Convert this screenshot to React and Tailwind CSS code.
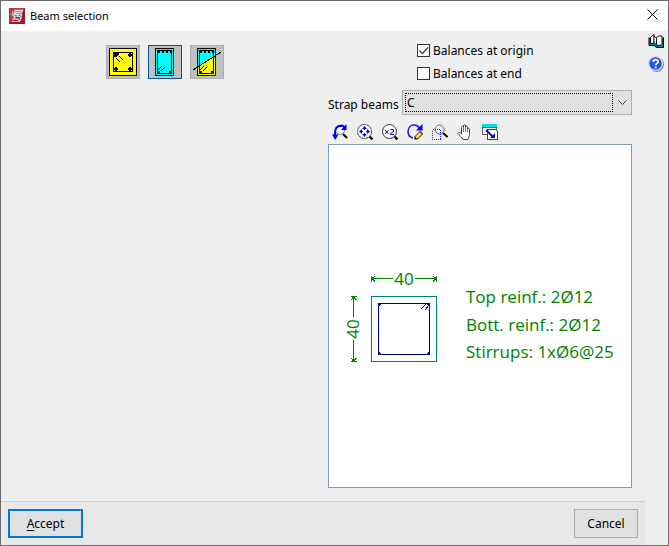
import React from "react";

function UndoZoomIcon() {
  return (
    <svg viewBox="0 0 16 16" className="size-4" fill="none">
      <circle cx="8" cy="6" r="4.5" fill="#fff" stroke="#777" />
      <path d="M11 10l4 4" stroke="#111" strokeWidth="2.2" />
      <path d="M13 4C11 0 3 1 3 9v3" stroke="#0000f0" strokeWidth="2" />
      <path d="M0 10.500h6.500L3.200 16z" fill="#0000f0" />
      <path d="M14.500 0v6H9z" fill="#0000f0" />
    </svg>
  );
}

function ZoomAllIcon() {
  return (
    <svg viewBox="0 0 16 16" className="size-4" fill="none">
      <circle cx="7.5" cy="7.5" r="7" fill="#fff" stroke="#333" strokeDasharray="3 0.5" />
      <path d="M12.500 12.500l3 3" stroke="#111" strokeWidth="2.4" />
      <path d="M7.500 3v3M7.500 9v3M3 7.500h3M9 7.500h3" stroke="#0000f0" />
      <path d="M5 5h5L7.500 2zM5 10h5l-2.500 3zM5 5v5L2 7.500zM10 5v5l3-2.500z" fill="#0000f0" />
      <path d="M6 6h3v3H6z" fill="#fff" />
    </svg>
  );
}

function ZoomDoubleIcon() {
  return (
    <svg viewBox="0 0 16 16" className="size-4" fill="none">
      <circle cx="7.5" cy="7.5" r="7" fill="#fff" stroke="#333" />
      <path d="M12.500 12.500l3 3" stroke="#111" strokeWidth="2.4" />
      <path d="M3 6l3.500 4M6.500 6L3 10M8.500 5.500h3v2l-3 2v1H12" stroke="#0000f0" />
    </svg>
  );
}

function RedrawIcon() {
  return (
    <svg viewBox="0 0 16 16" className="size-4" fill="none">
      <path d="M6 14C-1.500 12 0 1 7 1c3 0 5 2 6 4" stroke="#1414f0" strokeWidth="1.5" />
      <path d="M15.500 0v6.500H9z" fill="#0000f0" />
      <path d="M13 7.500l2.500 2.500-5 5H8v-2.500z" fill="#ffe33a" stroke="#111" />
      <path d="M13 7.500l2.500 2.500" stroke="#b22" strokeWidth="1.5" />
      <path d="M7 15.500l1.500-2.500 1.500 1.500z" fill="#111" />
    </svg>
  );
}

function ZoomWindowIcon() {
  return (
    <svg viewBox="0 0 16 16" className="size-4" fill="none">
      <circle cx="7.5" cy="5.5" r="4.5" fill="#f4f4f4" stroke="#666" />
      <path d="M11 9l4.500 4" stroke="#111" strokeWidth="2.2" />
      <path d="M.5 5.500h8v10h-8z" stroke="#2222ff" strokeDasharray="1 1" shapeRendering="crispEdges" />
    </svg>
  );
}

function PanIcon() {
  return (
    <svg viewBox="0 0 16 16" className="size-4" fill="none">
      <path
        d="M6 15.500c-1-2-3.500-4-5-6 0-1.500 1.500-1.500 3.500.5V3.500c0-1.500 1.800-1.500 2 0V2c0-1.700 2-1.700 2 0v1c.2-1.500 2-1.300 2 .2V5c.3-1.300 2-1 2 .3V10c0 2.500-1 3.500-1.500 5.500z"
        fill="#fff"
        stroke="#444"
      />
      <path d="M6.500 3.500V8M8.500 3v5M10.500 5v3" stroke="#777" />
    </svg>
  );
}

function FullViewIcon() {
  return (
    <svg viewBox="0 0 16 16" className="size-4" fill="none" shapeRendering="crispEdges">
      <path d="M.5.500h14v10H.5z" fill="#fff" stroke="#666" />
      <path d="M0 0h15v3H0z" fill="#00dede" />
      <path d="M0 3.500h15" stroke="#555" />
      <path d="M5.500 5.500h8l2 2v8h-10z" fill="#fff" stroke="#444" />
      <path d="M4 6l7 7" stroke="#0000d0" strokeWidth="1.8" shapeRendering="auto" />
      <path d="M13 9v5H8z" fill="#0000d0" shapeRendering="auto" />
    </svg>
  );
}

function FullSectionIcon() {
  return (
    <svg viewBox="0 0 32 32" className="size-8" fill="none" shapeRendering="crispEdges">
      <path d="M2.500 2.500h27v27h-27z" fill="#ff0" stroke="#000" />
      <path d="M6.500 6.500h19v19h-19z" stroke="#000" />
      <path d="M6 6h6v3h-1v1h-1v1H6zM22 7h2v1h1v2h-1v1h-2v-1h-1V8h1zM8 21h2v1h1v2h-1v1H8v-1H7v-2h1zM22 21h2v1h1v2h-1v1h-2v-1h-1v-2h1z" fill="#000" />
      <path d="M9 12l4 4M12 10l4 4" stroke="#000" />
    </svg>
  );
}

function StrapSectionIcon({ split }) {
  return (
    <svg viewBox="0 0 32 32" className="size-8" fill="none" shapeRendering="crispEdges">
      <path d="M6.500 2.500h18v27h-18z" fill="#0ff" />
      {split && <path d="M6 21L25 9v21H6z" fill="#ff0" />}
      <path d="M6.500 2.500h18v27h-18zM8.500 4.500h14v23h-14z" stroke="#000" />
      <path d="M9 5h2v2H9zM13 5h2v2h-2zM17 5h2v2h-2zM21 5h2v2h-2zM9 25h2v2H9zM20 25h2v2h-2z" fill="#000" />
      <path d="M9 24l4-4M12 25l4-4" stroke="#000" />
      {split && <path d="M2 24L30 6" stroke="#000" />}
    </svg>
  );
}

const tools = [
  ["Previous view", UndoZoomIcon],
  ["Zoom all", ZoomAllIcon],
  ["Zoom x2", ZoomDoubleIcon],
  ["Redraw", RedrawIcon],
  ["Zoom window", ZoomWindowIcon],
  ["Pan", PanIcon],
  ["Full view", FullViewIcon],
];

function TypeButton({ label, selected, children }) {
  return (
    <button
      type="button"
      aria-label={label}
      aria-pressed={!!selected}
      className={`flex size-[34px] items-center justify-center border bg-[#c0c0c0] ${
        selected ? "border-[#00539c]" : "border-[#adadad]"
      }`}
    >
      {children}
    </button>
  );
}

function CheckOption({ label, defaultChecked }) {
  return (
    <label className="flex h-[23px] items-center gap-[3px]">
      <span className="relative flex size-[13px]">
        <input
          type="checkbox"
          defaultChecked={defaultChecked}
          className="peer size-[13px] appearance-none border border-[#333] bg-white"
        />
        <svg
          viewBox="0 0 13 13"
          className="pointer-events-none absolute inset-0 hidden size-[13px] peer-checked:block"
          fill="none"
        >
          <path d="M2.500 6.500l3 3 5.500-6" stroke="#444" strokeWidth="1.3" />
        </svg>
      </span>
      {label}
    </label>
  );
}

function SectionDrawing() {
  return (
    <svg viewBox="0 0 302 342" className="min-h-0 w-full flex-1" fill="none" role="img" aria-label="Beam section">
      <g shapeRendering="crispEdges">
        <path d="M42.500 151.500h65v65h-65z" stroke="#008080" />
        <path d="M49.500 158.500h51v51h-51z" stroke="#000080" />
        <path d="M49 158h4v1h-1v1h-1v1h-1v1h-1zM97 158h4v4h-1v-1h-1v-1h-1v-1h-1zM49 210h4v-1h-1v-1h-1v-1h-1v-1h-1zM101 210h-4v-1h1v-1h1v-1h1v-1h1z" fill="#000080" />
        <path d="M97 159l-5 5M100 160l-4 5" stroke="#000080" />
        <g stroke="#008000">
          <path d="M42.500 131v6M42.500 133.500H64M86 133.500h21.500M107.500 131v6M46 131l-3 2.500 3 3M104 131l3 2.500-3 3" />
          <path d="M22 151.500h6M24.500 151.500V172M24.500 195v21.500M22 216.500h6M22 155l2.500-3 3 3M22 213l2.500 3 3-3" />
        </g>
      </g>
      <g fill="#008000" className="font-['Open_Sans',sans-serif] text-[17px]">
        <text x="75" y="140" textAnchor="middle">40</text>
        <text x="30" y="184" textAnchor="middle" transform="rotate(-90 30 184)">40</text>
        <text x="137" y="158">Top reinf.: 2Ø12</text>
        <text x="137" y="186">Bott. reinf.: 2Ø12</text>
        <text x="137" y="213">Stirrups: 1xØ6@25</text>
      </g>
    </svg>
  );
}

export default function App() {
  return (
    <div className="flex min-h-screen flex-col border border-[#6b6b6b] bg-[#efefef] font-['Noto_Sans',sans-serif] text-xs text-black">
      <header className="flex h-[30px] shrink-0 items-center bg-white px-2">
        <svg viewBox="0 0 16 16" className="size-4" fill="none">
          <path d="M0 0h16v16H0z" fill="#a3182a" />
          <path d="M0 0h16L0 16z" fill="#bd3341" />
          <path d="M5 2.500h8.500l-1 2H6L5 6.500h7.500l-1 5" stroke="#ddd" strokeWidth="1.4" />
          <path d="M4 8.500h7M3 11h8M2.500 13.500h8l1.500-2M4 3l-1 4 3 1.500-2 4" stroke="#c4c4c4" strokeWidth="1.2" />
          <path d="M5 5l6 4M5 10l6 3" stroke="#fff" strokeWidth="0.8" />
        </svg>
        <h1 className="ml-[5px] flex-1 text-[11px]">Beam selection</h1>
        <button type="button" aria-label="Close" className="flex size-4 items-start justify-center">
          <svg viewBox="0 0 11 11" className="mt-px size-[11px]">
            <path d="M.5.500l10 10M10.500.500l-10 10" stroke="#000" />
          </svg>
        </button>
      </header>

      <div className="flex flex-1">
        <div className="flex flex-1 flex-col">
          <main className="grid flex-1 grid-cols-[327fr_304fr] pr-[13px]">
            <section className="flex items-start justify-center gap-2 pt-[14px]">
              <TypeButton label="Tie beam"><FullSectionIcon /></TypeButton>
              <TypeButton label="Strap beam" selected><StrapSectionIcon /></TypeButton>
              <TypeButton label="Mixed beam"><StrapSectionIcon split /></TypeButton>
            </section>

            <section className="flex flex-col pb-[13px] pt-2">
              <div className="flex flex-col items-start pl-[89px]">
                <CheckOption label="Balances at origin" defaultChecked />
                <CheckOption label="Balances at end" />
              </div>
              <div className="mt-[5px] flex items-center">
                <label htmlFor="strap" className="w-[74px] whitespace-nowrap pt-1">Strap beams</label>
                <div className="relative flex h-[25px] flex-1 border border-[#adadad] bg-[#e1e1e1] p-0.5">
                  <select
                    id="strap"
                    className="mr-4 flex-1 appearance-none border border-dotted border-black bg-transparent pl-px"
                  >
                    <option>C</option>
                  </select>
                  <svg viewBox="0 0 9 5" className="pointer-events-none absolute right-1 top-[9px] h-[5px] w-[9px]" fill="none">
                    <path d="M.5.500l4 4 4-4" stroke="#444" />
                  </svg>
                </div>
              </div>
              <div className="flex h-[29px] items-center gap-[9px] pl-1 pt-[5px]">
                {tools.map(([name, Icon]) => (
                  <button key={name} type="button" aria-label={name} className="size-4">
                    <Icon />
                  </button>
                ))}
              </div>
              <div className="flex flex-1 flex-col border border-[#7f9db9] bg-white">
                <SectionDrawing />
              </div>
            </section>
          </main>

          <footer className="flex justify-between border-t border-[#cdcdcd] bg-[#e8e8e8] p-[7px]">
            <button type="button" className="h-[29px] w-[75px] border-2 border-[#0078d7] bg-[#e1e1e1]">
              <span className="underline underline-offset-2">A</span>ccept
            </button>
            <button type="button" className="h-[29px] w-16 border border-[#adadad] bg-[#e1e1e1]">Cancel</button>
          </footer>
        </div>

        <aside className="flex w-[23px] flex-col items-center gap-[7px] pr-px pt-[2px]">
          <button type="button" aria-label="Manual" className="size-4">
            <svg viewBox="0 0 16 16" className="size-4" fill="none">
              <path d="M1 4.500v8h5.500L8 14.500h7.500v-10" fill="#089" stroke="#000" />
              <path d="M2.500 10.500v-6l3.500-3v7.500l-1 1.500z" fill="#fff" stroke="#111" />
              <path d="M6 9l2.500 3V5.500L6 3z" fill="#eee" stroke="#111" strokeWidth="0.8" />
              <path d="M8.500 12.500v-8l2-1.500h3.500v9z" fill="#fff" stroke="#111" />
            </svg>
          </button>
          <button type="button" aria-label="Help" className="size-4">
            <svg viewBox="0 0 16 16" className="size-4" fill="none">
              <circle cx="8.5" cy="8.5" r="7.5" fill="#888" />
              <circle cx="7.5" cy="7.5" r="7.5" fill="#d5def5" />
              <circle cx="7.5" cy="7.5" r="6.2" fill="#2456e0" />
              <path d="M5.200 6c0-3 5-3 5-.3 0 1.800-2.500 1.800-2.500 3.600M7.700 10.500v1.800" stroke="#fff" strokeWidth="1.7" />
            </svg>
          </button>
        </aside>
      </div>
    </div>
  );
}
